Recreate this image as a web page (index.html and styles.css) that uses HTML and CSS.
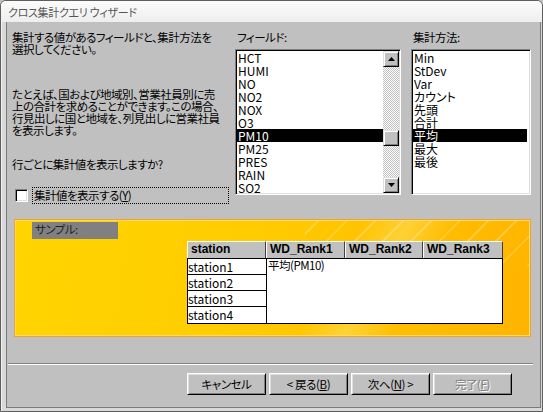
FILE: index.html
```html
<!DOCTYPE html>
<html lang="ja">
<head>
<meta charset="utf-8">
<title>クロス集計クエリ ウィザード</title>
<link rel="stylesheet" href="styles.css">
</head>
<body>
<div class="window">
  <div class="titlebar"><span class="title">クロス集計クエリ ウィザード</span></div>
  <div class="client">
    <div class="top">
      <div class="intro">
        <p class="txt">集計する値があるフィールドと、集計方法を<br>選択してください。</p>
        <p class="txt ex">たとえば、国および地域別、営業社員別に売<br>上の合計を求めることができます。この場合、<br>行見出しに国と地域を、列見出しに営業社員<br>を表示します。</p>
        <p class="txt q">行ごとに集計値を表示しますか?</p>
        <div class="check"><span class="cbox"></span><span class="focus">集計値を表示する(<u>Y</u>)</span></div>
      </div>
      <div class="col">
        <div class="lbl">フィールド:</div>
        <div class="listbox fields">
          <ul class="items">
            <li>HCT</li><li>HUMI</li><li>NO</li><li>NO2</li><li>NOX</li><li>O3</li>
            <li class="sel">PM10</li><li>PM25</li><li>PRES</li><li>RAIN</li><li>SO2</li>
          </ul>
          <div class="vscroll">
            <div class="sbtn"><svg width="7" height="4" viewBox="0 0 7 4"><polygon points="3.5,0 7,4 0,4" fill="#000"/></svg></div>
            <div class="track"><div class="thumb"></div></div>
            <div class="sbtn"><svg width="7" height="4" viewBox="0 0 7 4"><polygon points="0,0 7,0 3.5,4" fill="#000"/></svg></div>
          </div>
        </div>
      </div>
      <div class="col">
        <div class="lbl">集計方法:</div>
        <div class="listbox methods">
          <ul class="items">
            <li>Min</li><li>StDev</li><li>Var</li><li>カウント</li><li>先頭</li><li>合計</li>
            <li class="sel">平均</li><li>最大</li><li>最後</li>
          </ul>
        </div>
      </div>
    </div>
    <div class="sample">
      <div class="sample-label">サンプル:</div>
      <div class="grid">
        <div class="grid-head">
          <div class="th c1">station</div>
          <div class="th c2">WD_Rank1</div>
          <div class="th c3">WD_Rank2</div>
          <div class="th c4">WD_Rank3</div>
        </div>
        <div class="grid-body">
          <div class="td">station1</div>
          <div class="val">平均(PM10)</div>
          <div class="td">station2</div>
          <div class="td">station3</div>
          <div class="td last">station4</div>
        </div>
      </div>
    </div>
    <div class="sep"></div>
    <div class="buttons">
      <button class="btn">キャンセル</button>
      <button class="btn">&lt; 戻る(<u>B</u>)</button>
      <button class="btn">次へ(<u>N</u>) &gt;</button>
      <button class="btn disabled">完了(<u>F</u>)</button>
    </div>
  </div>
</div>
</body>
</html>
```
FILE: styles.css
```css
* { box-sizing: border-box; }
html, body { margin: 0; padding: 0; }
body {
  width: 543px;
  height: 412px;
  overflow: hidden;
  background: #c0c0c0;
  font-family: "Noto Sans CJK JP", "Liberation Sans", sans-serif;
  font-size: 12px;
  color: #000;
  font-feature-settings: "palt";
}
.window {
  width: 543px;
  height: 412px;
  border: 1px solid #5e5e5e;
  border-radius: 6px 6px 0 0;
  background: #d9d9d9;
  display: flex;
  flex-direction: column;
  box-shadow: inset 1px 0 #f2f2f2;
}
.titlebar {
  height: 21px;
  flex: none;
  display: flex;
  align-items: center;
  padding-left: 7px;
  border-radius: 5px 5px 0 0;
  background: linear-gradient(#fcfcfc, #eeeeee);
}
.title {
  color: #555;
  font-size: 11px;
  letter-spacing: -0.3px;
  line-height: 12px;
}
.client {
  flex: 1;
  margin: 0 1px 3px 5px;
  border: 1px solid #7a7a7a;
  border-top: none;
  background: #c0c0c0;
  padding: 9px 0 0 5px;
  display: flex;
  flex-direction: column;
}
.top {
  display: grid;
  grid-template-columns: 213px 166px 120px;
  column-gap: 10px;
  align-items: start;
}
.txt, .lbl, .focus, .sample-label, .val {
  font-size: 11.5px;
  letter-spacing: -0.5px;
}
.txt {
  margin: 0;
  line-height: 12px;
  white-space: nowrap;
}
.ex { margin-top: 33px; }
.q { margin-top: 22px; }
.check {
  display: flex;
  align-items: center;
  margin: 17px 0 0 3px;
  height: 17px;
}
.cbox {
  width: 13px;
  height: 13px;
  flex: none;
  background: #fff;
  border: 1px solid;
  border-color: #808080 #fff #fff #808080;
  box-shadow: inset 1px 1px #000, inset -1px -1px #dfdfdf;
}
.focus {
  margin-left: 4px;
  width: 197px;
  flex: none;
  height: 17px;
  border: 1px dotted #000;
  line-height: 15px;
  padding-left: 1px;
  white-space: nowrap;
}
.lbl {
  line-height: 12px;
  padding-left: 2px;
  height: 12px;
}
.listbox {
  margin-top: 6px;
  height: 146px;
  background: #fff;
  border: 1px solid;
  border-color: #808080 #fff #fff #808080;
  box-shadow: inset 1px 1px #000, inset -1px -1px #dfdfdf;
  padding: 1px;
  display: flex;
}
.items {
  list-style: none;
  margin: 0;
  padding: 0;
  flex: 1;
}
.items li {
  height: 13px;
  line-height: 13px;
  padding-left: 1px;
  white-space: nowrap;
}
.items li.sel {
  background: #000;
  color: #fff;
}
.methods .items { margin-right: 2px; }
.vscroll {
  width: 16px;
  display: flex;
  flex-direction: column;
}
.sbtn, .thumb {
  width: 16px;
  height: 16px;
  flex: none;
  background: #c0c0c0;
  border: 1px solid;
  border-color: #dfdfdf #000 #000 #dfdfdf;
  box-shadow: inset 1px 1px #fff, inset -1px -1px #808080;
  display: flex;
  align-items: center;
  justify-content: center;
}
.sbtn svg { display: block; }
.track {
  flex: 1;
  background: repeating-conic-gradient(#fff 0 25%, #c0c0c0 0 50%) 0 0 / 2px 2px;
}
.thumb { margin-top: 63px; }
.sample {
  margin: 15px 0 0 2px;
  width: 517px;
  height: 118px;
  border: 1px solid #e9a43a;
  box-shadow: inset 0 0 0 1px #ffd860;
  padding: 2px 0 0 17px;
  background:
    repeating-linear-gradient(135deg, rgba(255,255,255,0) 0 9px, rgba(255,255,255,0.22) 9px 11px, rgba(255,255,255,0) 11px 20px) 290px 0 / 230px 46px no-repeat,
    linear-gradient(120deg, rgba(255,255,255,0) 0 60%, rgba(255,240,150,0.35) 68%, rgba(255,255,255,0) 76%),
    linear-gradient(100deg, #ffd400 0%, #ffcc00 45%, #ffb400 100%);
}
.sample-label {
  width: 86px;
  height: 17px;
  background: #808080;
  color: #1e1e1e;
  line-height: 15px;
  padding-left: 3px;
}
.grid {
  margin: 2px 0 0 155px;
  width: 316px;
}
.grid-head { display: flex; }
.th {
  height: 17px;
  background: #c0c0c0;
  border-top: 1px solid #fff;
  border-left: 1px solid #fff;
  border-right: 1px solid #404040;
  font-family: "Liberation Sans", sans-serif;
  font-weight: bold;
  font-size: 12px;
  line-height: 15px;
  padding-left: 3px;
}
.c1 { width: 79px; }
.c2 { width: 79px; }
.c3 { width: 78px; }
.c4 { width: 80px; }
.grid-body {
  display: grid;
  grid-template-columns: 79px 1fr;
  grid-template-rows: repeat(4, 16px);
  border: 1px solid #000;
  background: #fff;
  height: 66px;
}
.td {
  grid-column: 1;
  border-right: 1px solid #000;
  border-bottom: 1px solid #000;
  line-height: 15px;
  white-space: nowrap;
}
.td.last { border-bottom: none; }
.val {
  grid-column: 2;
  grid-row: 1 / span 4;
  line-height: 13px;
  padding-left: 1px;
}
.sep {
  margin: 26px 0 0 -4px;
  width: 525px;
  height: 2px;
  border-top: 1px solid #808080;
  border-bottom: 1px solid #fff;
}
.buttons {
  display: flex;
  gap: 3px;
  margin: 8px 0 0 175px;
}
.btn {
  width: 79px;
  height: 22px;
  padding: 0;
  font-family: "Noto Sans CJK JP", "Liberation Sans", sans-serif;
  font-feature-settings: "palt";
  font-size: 11.5px;
  letter-spacing: -0.4px;
  line-height: 12px;
  color: #000;
  background: #c0c0c0;
  border: 1px solid;
  border-color: #fff #000 #000 #fff;
  box-shadow: inset 1px 1px #dfdfdf, inset -1px -1px #808080;
}
.btn.disabled {
  color: #808080;
  text-shadow: 1px 1px #fff;
}
```
